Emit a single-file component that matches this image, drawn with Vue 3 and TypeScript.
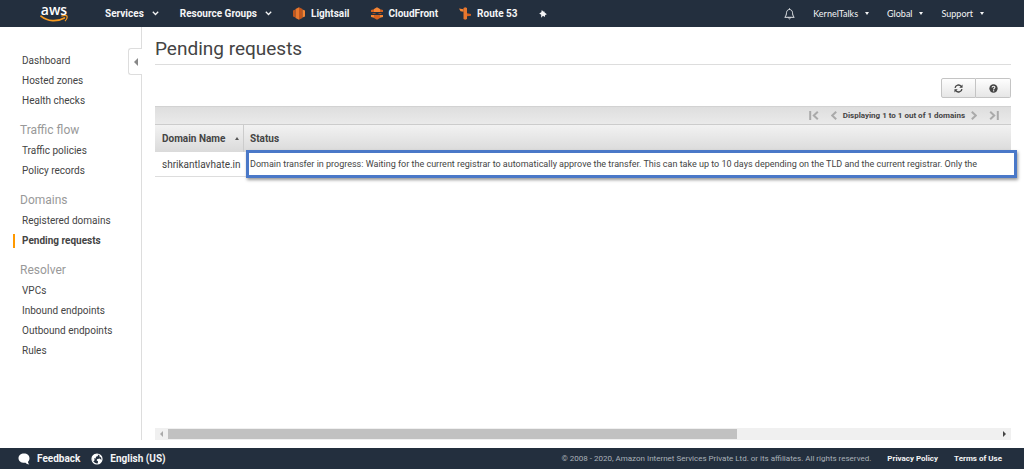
<script setup lang="ts">
import { ref } from 'vue'

interface NavGroup {
  title?: string
  items: string[]
}

const groups: NavGroup[] = [
  { items: ['Dashboard', 'Hosted zones', 'Health checks'] },
  { title: 'Traffic flow', items: ['Traffic policies', 'Policy records'] },
  { title: 'Domains', items: ['Registered domains', 'Pending requests'] },
  { title: 'Resolver', items: ['VPCs', 'Inbound endpoints', 'Outbound endpoints', 'Rules'] },
]

const active = ref('Pending requests')

const requests = [
  {
    domain: 'shrikantlavhate.in',
    status:
      'Domain transfer in progress: Waiting for the current registrar to automatically approve the transfer. This can take up to 10 days depending on the TLD and the current registrar. Only the',
  },
]
</script>

<template>
  <div class="console">
    <header class="topbar">
      <a class="logo" href="#" aria-label="AWS home">
        <span class="logo-text">aws</span>
        <svg class="smile" viewBox="0 0 28 8" aria-hidden="true">
          <path d="M1 1.2C8 6.8 17 7 24.4 2.9" fill="none" stroke="#f79a1f" stroke-width="1.7" stroke-linecap="round" />
          <path d="M21.4 1.1C24 .3 26.400 .4 26.900 1C27.300 2 26.600 4.600 25 6.200" fill="none" stroke="#f79a1f" stroke-width="1.2" />
        </svg>
      </a>
      <nav class="menus" aria-label="Services">
        <button class="menu" type="button">
          Services
          <svg class="chev" viewBox="0 0 7 5"><path d="M.8 .8L3.500 3.500L6.200 .8" fill="none" stroke="currentColor" stroke-width="1.300" /></svg>
        </button>
        <button class="menu" type="button">
          Resource Groups
          <svg class="chev" viewBox="0 0 7 5"><path d="M.8 .8L3.500 3.500L6.200 .8" fill="none" stroke="currentColor" stroke-width="1.300" /></svg>
        </button>
        <a class="shortcut" href="#">
          <svg viewBox="0 0 12 13">
            <path d="M0 3.500L2.500 2.500V10.500L0 9.500Z" fill="#c2561c" />
            <path d="M2.500 2L6 .3V12.700L2.500 11Z" fill="#e8772e" />
            <path d="M6 .3L9.500 2V11L6 12.700Z" fill="#c2561c" />
            <path d="M9.500 2.500L12 3.500V9.500L9.500 10.500Z" fill="#f58534" />
          </svg>
          Lightsail
        </a>
        <a class="shortcut" href="#">
          <svg viewBox="0 0 12 13">
            <path d="M3 2L6 .3L9 2V5H3Z" fill="#f58534" />
            <path d="M3 11L6 12.700L9 11V8H3Z" fill="#d4611f" />
            <path d="M0 3L3 2.200V5H0ZM9 2.200L12 3V5H9Z" fill="#d4611f" />
            <path d="M0 8H3V10.800L0 10ZM9 8H12V10L9 10.800Z" fill="#f58534" />
            <path d="M1.500 6H4.500V7H1.500ZM7.500 6H10.500V7H7.500Z" fill="#a34a1c" />
          </svg>
          CloudFront
        </a>
        <a class="shortcut" href="#">
          <svg viewBox="0 0 12 13">
            <path d="M4.500 1L6.200 .2L8 1V12L6.200 12.800L4.500 12Z" fill="#e8772e" />
            <path d="M0 1.500L4.500 2.300V4.800L1.500 4.300Z" fill="#f58534" />
            <path d="M8 6.300L12 7V8.800L8 9.300Z" fill="#d4611f" />
          </svg>
          Route 53
        </a>
        <button class="pin" type="button" aria-label="Edit shortcuts">
          <svg viewBox="0 0 8 8"><path d="M2.800 0L4.300 1.600L5.400 1.500L5.600 2.600L7.900 4.200L6.200 5.100L5.700 6.900L4 5.700L2.100 7.800L2.200 4.700L.2 3.400L2.300 2.300Z" fill="#f4f5f6" /></svg>
        </button>
      </nav>
      <div class="account">
        <button class="bell" type="button" aria-label="Notifications">
          <svg viewBox="0 0 11 12"><path d="M.8 9.300C2.300 7.700 2.300 6.400 2.500 4.600C2.700 2.700 3.900 1.500 5.500 1.500S8.300 2.700 8.500 4.600C8.700 6.400 8.700 7.700 10.200 9.300ZM4.300 9.800Q5.500 12 6.700 9.800M5.500 1.500V.3" fill="none" stroke="#e4e7ea" stroke-width="1" /></svg>
        </button>
        <button type="button">KernelTalks<i class="caret"></i></button>
        <button type="button">Global<i class="caret"></i></button>
        <button type="button">Support<i class="caret"></i></button>
      </div>
    </header>

    <div class="body">
      <aside class="sidebar">
        <button class="collapse" type="button" aria-label="Collapse navigation"><i></i></button>
        <nav aria-label="Route 53">
          <section v-for="(group, i) in groups" :key="i">
            <h2 v-if="group.title">{{ group.title }}</h2>
            <ul>
              <li v-for="item in group.items" :key="item">
                <a href="#" :class="{ active: item === active }" @click.prevent="active = item">{{ item }}</a>
              </li>
            </ul>
          </section>
        </nav>
      </aside>

      <main>
        <h1>Pending requests</h1>
        <div class="actions">
          <button type="button" aria-label="Refresh">
            <svg viewBox="0 0 10 10"><path d="M1.200 4.400A3.800 3.800 0 0 1 8 2.600M8.800 5.600A3.800 3.800 0 0 1 2 7.400" fill="none" stroke="#444" stroke-width="1.500" /><path d="M9.500 .6V4.200H5.900ZM.5 9.400V5.800H4.100Z" fill="#444" /></svg>
          </button>
          <button type="button" aria-label="Help">
            <svg viewBox="0 0 10 10"><circle cx="5" cy="5" r="4.600" fill="#444" /><path d="M3.400 3.900C3.500 2 6.600 2.100 6.500 3.900C6.400 4.800 5.100 4.800 5.100 6.100" fill="none" stroke="#f4f4f4" stroke-width="1.300" /><path d="M4.400 6.900H5.800V8.200H4.400Z" fill="#f4f4f4" /></svg>
          </button>
        </div>

        <div class="grid">
          <div class="pager">
            <button type="button" aria-label="First page"><svg viewBox="0 0 10 9"><path d="M1.200 0V9M8.800 .8L4.800 4.500L8.800 8.200" /></svg></button>
            <button type="button" aria-label="Previous page"><svg viewBox="0 0 6 9"><path d="M5.200 .8L1.200 4.500L5.200 8.200" /></svg></button>
            <span>Displaying 1 to 1 out of 1 domains</span>
            <button type="button" aria-label="Next page"><svg viewBox="0 0 6 9"><path d="M.8 .8L4.800 4.500L.8 8.200" /></svg></button>
            <button type="button" aria-label="Last page"><svg viewBox="0 0 10 9"><path d="M8.800 0V9M1.200 .8L5.200 4.500L1.200 8.200" /></svg></button>
          </div>
          <div class="records">
            <table>
              <thead>
                <tr>
                  <th class="name" scope="col"><div>Domain Name<i class="sort"></i></div></th>
                  <th scope="col">Status</th>
                </tr>
              </thead>
              <tbody>
                <tr v-for="row in requests" :key="row.domain">
                  <td>{{ row.domain }}</td>
                  <td class="status">{{ row.status }}</td>
                </tr>
              </tbody>
            </table>
            <div class="highlight"></div>
          </div>
        </div>

        <div class="scroll">
          <button class="left" type="button" aria-label="Scroll left"><i></i></button>
          <div class="track"><div class="thumb"></div></div>
          <button class="right" type="button" aria-label="Scroll right"><i></i></button>
        </div>
      </main>
    </div>

    <footer>
      <button type="button">
        <svg viewBox="0 0 12 12"><path d="M6 .6C9.200 .6 11.500 2.500 11.500 5.200C11.500 7 10.600 8.300 10 8.800C10 9.800 10.500 10.800 11.300 11.400C9.700 11.400 8.400 10.800 7.600 9.800C3.500 10.300 .5 8.200 .5 5.200C.5 2.500 2.800 .6 6 .6Z" fill="#fff" /></svg>
        Feedback
      </button>
      <button type="button">
        <svg viewBox="0 0 12 12"><circle cx="6" cy="6" r="5" fill="#232f3e" stroke="#fff" stroke-width="1.200" /><path d="M1.500 3.500L4 1L7.500 1.300L6.600 3.200L5 3.800L4.700 5.500L3 5.300L3.700 7L2.500 8.500L1 6ZM6 6.200L8.700 5.600L11 7.500L8 11L6.800 10.500L7 8.300L5.700 7.600ZM8.500 2L10.500 4L8.700 4.200Z" fill="#fff" /></svg>
        English (US)
      </button>
      <small>© 2008 - 2020, Amazon Internet Services Private Ltd. or its affiliates. All rights reserved.</small>
      <a href="#">Privacy Policy</a>
      <a href="#">Terms of Use</a>
    </footer>
  </div>
</template>

<style>
body {
  margin: 0;
  background: #fff;
}
</style>

<style scoped>
.console {
  min-height: 100vh;
  display: flex;
  flex-direction: column;
  font-family: Roboto, "Liberation Sans", sans-serif;
  font-size: 10px;
  color: #444;
}
* { box-sizing: border-box; }
svg { display: block; flex: none; }
button {
  border: 0;
  padding: 0;
  margin: 0;
  background: none;
  font: inherit;
  color: inherit;
  display: flex;
  align-items: center;
  cursor: pointer;
}
a { color: inherit; text-decoration: none; }

.topbar {
  height: 27px;
  display: flex;
  align-items: center;
  background: #232f3e;
  color: #f4f5f6;
  padding: 0 40px;
}
.logo {
  width: 28px;
  display: flex;
  flex-direction: column;
  align-items: center;
}
.logo-text {
  font: 600 14px/11px "Open Sans", sans-serif;
  color: #fff;
}
.smile { width: 28px; height: 8px; }
.menus {
  display: flex;
  align-items: center;
  font-weight: 700;
  margin-left: 37px;
}
.menu { gap: 8px; margin-right: 21px; }
.chev { width: 7px; height: 5px; }
.shortcut {
  display: flex;
  align-items: center;
  gap: 6px;
  margin-right: 21px;
}
.shortcut svg { width: 12px; height: 13px; }
.pin svg { width: 8px; height: 8px; }
.account {
  margin-left: auto;
  display: flex;
  align-items: center;
  gap: 18px;
  font-family: Lato, sans-serif;
  font-size: 9px;
}
.bell svg { width: 11px; height: 12px; }
.caret {
  margin-left: 7px;
  border: 2px solid transparent;
  border-top: 3px solid currentColor;
  border-bottom: 0;
}

.body { flex: 1; display: flex; }
.sidebar {
  position: relative;
  width: 142px;
  flex: none;
  border-right: 1px solid #ddd;
  padding: 24px 0 0 13px;
  margin-bottom: 8px;
}
.collapse {
  position: absolute;
  top: 21px;
  right: -1px;
  width: 14px;
  height: 27px;
  border: 1px solid #ddd;
  border-right: 0;
  border-radius: 3px 0 0 3px;
  background: #fff;
  justify-content: center;
}
.collapse i {
  border: 4px solid transparent;
  border-right-color: #888;
  border-left: 0;
}
.sidebar section + section { margin-top: 8px; }
h2 {
  margin: 0;
  padding-left: 7px;
  font-size: 12px;
  line-height: 22px;
  font-weight: 400;
  color: #999;
}
ul { margin: 0; padding: 0; list-style: none; }
li { padding: 3px 0; height: 20px; }
li a {
  display: block;
  line-height: 14px;
  padding-left: 7px;
  border-left: 2px solid transparent;
}
li a.active { font-weight: 700; border-left-color: #f90; }

main {
  flex: 1;
  min-width: 0;
  display: flex;
  flex-direction: column;
  padding: 0 13px 8px 13px;
}
h1 {
  margin: 0 0 13px;
  padding: 9px 0 2px;
  font-size: 19px;
  line-height: 26px;
  font-weight: 400;
  border-bottom: 1px solid #ddd;
}
.actions { display: flex; justify-content: flex-end; margin-bottom: 8px; }
.actions button {
  width: 35px;
  height: 20px;
  justify-content: center;
  border: 1px solid #c4c4c4;
  background: linear-gradient(#fefefe, #e6e6e6);
}
.actions button:first-child { border-radius: 2px 0 0 2px; }
.actions button:last-child { border-left: 0; border-radius: 0 2px 2px 0; }
.actions svg { width: 9px; height: 9px; }

.grid { flex: 1; }
.pager {
  height: 18px;
  display: flex;
  align-items: center;
  justify-content: flex-end;
  padding-right: 12px;
  background: linear-gradient(#dedede, #eaeaea);
  border-top: 1px solid #d2d2d2;
  font-size: 8px;
  font-weight: 700;
}
.pager svg { height: 9px; fill: none; stroke: #aaa; stroke-width: 2px; }
.pager button { margin-left: 12px; }
.pager span { margin: 0 -6px 0 6px; }
.records { position: relative; }
table {
  width: 100%;
  table-layout: fixed;
  border-collapse: separate;
  border-spacing: 0;
}
th, td {
  text-align: left;
  padding: 0 7px;
  white-space: nowrap;
  overflow: hidden;
}
th {
  height: 28px;
  background: linear-gradient(#f2f2f2, #dadada);
  border-top: 1px solid #ccc;
  padding-left: 6px;
}
th.name { width: 89px; padding: 0 4px 0 7px; border-right: 1px solid #ccc; }
th.name div { display: flex; align-items: center; justify-content: space-between; }
.sort {
  border: 2px solid transparent;
  border-top: 0;
  border-bottom: 3px solid #555;
}
td {
  height: 25px;
  border-bottom: 1px solid #ddd;
}
td.status { padding: 0 0 0 6px; font-size: 9px; }
.highlight {
  position: absolute;
  top: 26px;
  bottom: -1px;
  left: 91px;
  right: -6px;
  border: 3px solid #4a78c8;
  box-shadow: 1px 2px 3px #999;
  pointer-events: none;
}

.scroll { display: flex; height: 12px; background: #f0f0f0; }
.scroll button { width: 13px; justify-content: center; }
.scroll i { border: 3px solid transparent; }
.scroll .left i { border-right-color: #aaa; border-left: 0; }
.scroll .right i { border-left-color: #444; border-right: 0; }
.track { flex: 1; padding: 1px 0; }
.thumb { width: 68.5%; height: 100%; background: #c1c1c1; }

footer {
  height: 21px;
  display: flex;
  align-items: center;
  background: #232f3e;
  color: #f4f5f6;
  padding: 0 22px 0 18px;
  font-weight: 700;
}
footer button { gap: 7px; margin-right: 11px; }
footer svg { width: 12px; height: 12px; }
footer small {
  margin-left: auto;
  font-size: 8px;
  font-weight: 400;
  color: #aab1b9;
}
footer a { margin-left: 16px; font-size: 8px; }
</style>
